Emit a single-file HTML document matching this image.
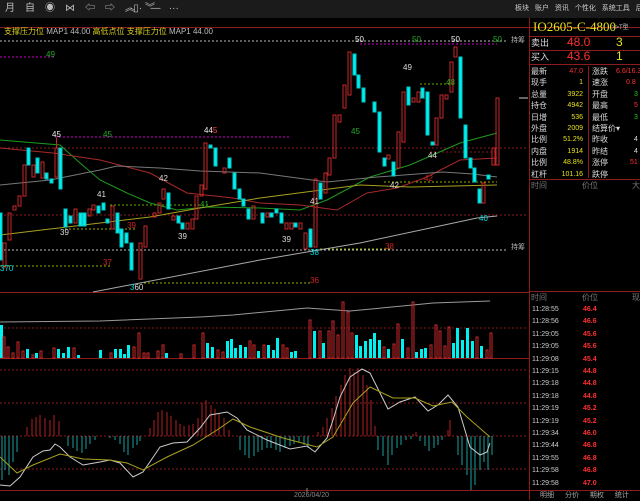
<!DOCTYPE html>
<html><head><meta charset="utf-8"><style>
*{margin:0;padding:0}
body{width:640px;height:500px;background:#000;overflow:hidden;position:relative;font-family:"Liberation Sans","Noto Sans CJK SC",sans-serif;}
.t{position:absolute;white-space:nowrap;font-size:8px;line-height:10px}
svg{position:absolute;left:0;top:0}
</style></head><body>
<svg width="640" height="500" viewBox="0 0 640 500">
<rect x="0" y="0" width="640" height="18" fill="#1b1b1b"/>
<!-- frame -->
<g stroke="#8c1c1c" stroke-width="1" fill="none">
<line x1="0" y1="27.5" x2="640" y2="27.5"/>
<line x1="0" y1="292.5" x2="529" y2="292.5"/>
<line x1="0" y1="358.5" x2="529" y2="358.5"/>
<line x1="0" y1="490.5" x2="640" y2="490.5"/>
<line x1="529.5" y1="18" x2="529.5" y2="500"/>
<line x1="530" y1="36.5" x2="640" y2="36.5"/>
<line x1="530" y1="50.5" x2="640" y2="50.5"/>
<line x1="530" y1="64.5" x2="640" y2="64.5"/>
<line x1="588.5" y1="66" x2="588.5" y2="178"/>
<line x1="530" y1="179.5" x2="640" y2="179.5"/>
<line x1="530" y1="291.5" x2="640" y2="291.5"/>
</g>
<!-- dotted levels -->
<g fill="none" stroke-dasharray="2,2">
<line x1="0" y1="41" x2="508" y2="41" stroke="#bbb"/>
<line x1="0" y1="250" x2="508" y2="250" stroke="#bbb"/>
<line x1="0" y1="148" x2="528" y2="148" stroke="#8a1a1a"/>
<line x1="0" y1="215" x2="528" y2="215" stroke="#8a1a1a"/>
<line x1="0" y1="57" x2="55" y2="57" stroke="#c0c"/>
<line x1="55" y1="137" x2="290" y2="137" stroke="#c0c"/>
<line x1="360" y1="44" x2="497" y2="44" stroke="#c0c"/>
<line x1="0" y1="266" x2="110" y2="266" stroke="#9a0"/>
<line x1="65" y1="229" x2="135" y2="229" stroke="#9a0"/>
<line x1="110" y1="205" x2="210" y2="205" stroke="#6a0"/>
<line x1="140" y1="283" x2="310" y2="283" stroke="#9a0"/>
<line x1="320" y1="249" x2="390" y2="249" stroke="#9a0"/>
<line x1="384" y1="182" x2="497" y2="182" stroke="#9a0"/>
<line x1="420" y1="84" x2="455" y2="84" stroke="#6a0"/>
<line x1="430" y1="152" x2="497" y2="152" stroke="#8a1a1a"/>
<line x1="0" y1="328" x2="528" y2="328" stroke="#8a1a1a"/>
<line x1="0" y1="370" x2="528" y2="370" stroke="#8a1a1a"/>
<line x1="0" y1="403" x2="528" y2="403" stroke="#8a1a1a"/>
<line x1="0" y1="469" x2="528" y2="469" stroke="#8a1a1a"/>
<line x1="0" y1="436" x2="528" y2="436" stroke="#8a1a1a"/>
</g>
<!-- MAs -->
<g fill="none" stroke-width="1">
<polyline stroke="#1c9a1c" points="0,140 60,145 80,163 100,180 127,193 150,203 177,210 207,207 260,208 300,210 327,200 370,177 410,165 460,143 497,133"/>
<polyline stroke="#a82a2a" points="0,148 53,153 100,160 150,173 187,193 233,198 260,203 300,205 337,210 367,193 397,188 427,177 460,160 497,158"/>
<polyline stroke="#777" points="0,185 50,180 100,170 117,166 160,168 200,171 260,173 327,182 377,177 443,172 473,174 497,177"/>
<polyline stroke="#a8a020" points="0,235 67,227 150,217 200,208 260,198 360,185 410,187 497,185"/>
<polyline stroke="#aaa" points="93,292 260,260 360,243 477,218 497,216"/>
<line x1="519" y1="98" x2="528" y2="98" stroke="#ccc"/>
</g>
<!-- candles -->
<g fill="#00f0f0" stroke="#00c8c8" stroke-width="1">
<rect x="-1" y="213" width="3" height="47"/><rect x="27" y="148" width="3" height="17"/><rect x="36" y="158" width="3" height="15"/><rect x="45" y="173" width="3" height="6"/><rect x="50" y="179" width="3" height="4"/><rect x="59" y="148" width="3" height="41"/><rect x="64" y="209" width="3" height="18"/><rect x="69" y="216" width="3" height="7"/><rect x="79" y="213" width="3" height="13"/><rect x="83" y="213" width="3" height="13"/><rect x="97" y="206" width="3" height="7"/><rect x="102" y="203" width="3" height="7"/><rect x="106" y="219" width="3" height="4"/><rect x="116" y="213" width="3" height="20"/><rect x="120" y="229" width="3" height="18"/><rect x="125" y="233" width="3" height="10"/><rect x="130" y="243" width="3" height="27"/><rect x="167" y="193" width="3" height="16"/><rect x="177" y="216" width="3" height="7"/><rect x="181" y="223" width="3" height="6"/><rect x="209" y="145" width="3" height="3"/><rect x="214" y="148" width="3" height="18"/><rect x="228" y="158" width="3" height="10"/><rect x="233" y="173" width="3" height="16"/><rect x="238" y="189" width="3" height="10"/><rect x="242" y="199" width="3" height="7"/><rect x="247" y="209" width="3" height="10"/><rect x="261" y="213" width="3" height="10"/><rect x="270" y="213" width="3" height="4"/><rect x="275" y="209" width="3" height="4"/><rect x="280" y="213" width="3" height="10"/><rect x="294" y="223" width="3" height="4"/><rect x="309" y="229" width="3" height="18"/><rect x="319" y="183" width="3" height="16"/><rect x="353" y="54" width="3" height="21"/><rect x="357" y="75" width="3" height="13"/><rect x="362" y="88" width="3" height="14"/><rect x="373" y="102" width="3" height="10"/><rect x="378" y="112" width="3" height="40"/><rect x="383" y="158" width="3" height="8"/><rect x="392" y="162" width="3" height="14"/><rect x="407" y="87" width="3" height="18"/><rect x="421" y="88" width="3" height="10"/><rect x="426" y="92" width="3" height="43"/><rect x="431" y="142" width="3" height="3"/><rect x="459" y="57" width="3" height="61"/><rect x="464" y="125" width="3" height="33"/><rect x="469" y="158" width="3" height="10"/><rect x="473" y="168" width="3" height="14"/><rect x="478" y="189" width="3" height="14"/><rect x="487" y="175" width="3" height="4"/>
</g>
<g fill="none" stroke="#c8282a" stroke-width="1">
<rect x="3" y="243" width="3" height="24"/><rect x="8" y="213" width="3" height="27"/><rect x="13" y="206" width="3" height="4"/><rect x="18" y="196" width="3" height="10"/><rect x="23" y="165" width="3" height="31"/><rect x="32" y="165" width="3" height="12"/><rect x="41" y="162" width="3" height="16"/><rect x="55" y="148" width="3" height="29"/><line x1="56.5" y1="138" x2="56.5" y2="148"/><rect x="74" y="209" width="3" height="14"/><rect x="88" y="209" width="3" height="7"/><rect x="92" y="205" width="3" height="5"/><rect x="111" y="206" width="3" height="23"/><rect x="139" y="243" width="3" height="36"/><rect x="144" y="226" width="3" height="21"/><rect x="153" y="213" width="3" height="4"/><rect x="158" y="203" width="3" height="10"/><rect x="162" y="189" width="3" height="10"/><rect x="172" y="216" width="3" height="4"/><rect x="186" y="223" width="3" height="6"/><rect x="191" y="219" width="3" height="10"/><rect x="195" y="196" width="3" height="23"/><rect x="200" y="185" width="3" height="11"/><rect x="204" y="143" width="3" height="46"/><rect x="223" y="168" width="3" height="5"/><rect x="252" y="206" width="3" height="13"/><rect x="266" y="213" width="3" height="4"/><rect x="285" y="223" width="3" height="6"/><rect x="290" y="223" width="3" height="6"/><rect x="299" y="223" width="3" height="6"/><rect x="304" y="233" width="3" height="16"/><rect x="314" y="179" width="3" height="68"/><rect x="324" y="173" width="3" height="20"/><rect x="328" y="158" width="3" height="17"/><rect x="333" y="115" width="3" height="43"/><rect x="338" y="115" width="3" height="7"/><rect x="343" y="85" width="3" height="23"/><rect x="348" y="52" width="3" height="43"/><rect x="387" y="155" width="3" height="4"/><rect x="397" y="132" width="3" height="36"/><rect x="402" y="92" width="3" height="50"/><rect x="412" y="98" width="3" height="4"/><rect x="417" y="92" width="3" height="10"/><rect x="435" y="118" width="3" height="27"/><rect x="440" y="95" width="3" height="23"/><rect x="445" y="95" width="3" height="4"/><rect x="450" y="62" width="3" height="30"/><rect x="454" y="47" width="3" height="10"/><rect x="482" y="183" width="3" height="20"/><rect x="492" y="148" width="3" height="17"/><rect x="496" y="98" width="3" height="67"/>
</g>
<!-- volume -->
<polyline fill="none" stroke="#999" points="0,322 100,321 200,317 233,315 307,308 350,311 413,305 433,303 490,301"/>
<g fill="#00f0f0">
<rect x="0" y="325" width="3" height="33"/><rect x="26" y="349" width="3" height="9"/><rect x="35" y="353" width="3" height="5"/><rect x="57" y="349" width="3" height="9"/><rect x="62" y="353" width="3" height="5"/><rect x="67" y="347" width="3" height="11"/><rect x="77" y="355" width="3" height="3"/><rect x="99" y="350" width="3" height="8"/><rect x="114" y="349" width="3" height="9"/><rect x="119" y="349" width="3" height="9"/><rect x="123" y="354" width="3" height="4"/><rect x="127" y="345" width="3" height="13"/><rect x="165" y="353" width="3" height="5"/><rect x="206" y="343" width="3" height="15"/><rect x="211" y="347" width="3" height="11"/><rect x="226" y="341" width="3" height="17"/><rect x="230" y="339" width="3" height="19"/><rect x="234" y="348" width="3" height="10"/><rect x="239" y="345" width="3" height="13"/><rect x="244" y="347" width="3" height="11"/><rect x="257" y="351" width="3" height="7"/><rect x="267" y="345" width="3" height="13"/><rect x="272" y="350" width="3" height="8"/><rect x="276" y="338" width="3" height="20"/><rect x="290" y="352" width="3" height="6"/><rect x="294" y="351" width="3" height="7"/><rect x="313" y="331" width="3" height="27"/><rect x="322" y="343" width="3" height="15"/><rect x="355" y="335" width="3" height="23"/><rect x="359" y="346" width="3" height="12"/><rect x="364" y="341" width="3" height="17"/><rect x="369" y="339" width="3" height="19"/><rect x="373" y="333" width="3" height="25"/><rect x="378" y="340" width="3" height="18"/><rect x="387" y="349" width="3" height="9"/><rect x="401" y="339" width="3" height="19"/><rect x="415" y="352" width="3" height="6"/><rect x="420" y="349" width="3" height="9"/><rect x="424" y="348" width="3" height="10"/><rect x="452" y="343" width="3" height="15"/><rect x="456" y="328" width="3" height="30"/><rect x="461" y="340" width="3" height="18"/><rect x="466" y="328" width="3" height="30"/><rect x="471" y="341" width="3" height="17"/><rect x="480" y="346" width="3" height="12"/>
</g>
<g fill="none" stroke="#c8282a">
<rect x="3" y="337" width="2" height="21"/><rect x="7" y="347" width="2" height="11"/><rect x="12" y="353" width="2" height="5"/><rect x="17" y="342" width="2" height="16"/><rect x="22" y="351" width="2" height="7"/><rect x="32" y="355" width="2" height="3"/><rect x="40" y="351" width="2" height="7"/><rect x="53" y="348" width="2" height="10"/><rect x="73" y="348" width="2" height="10"/><rect x="110" y="353" width="2" height="5"/><rect x="133" y="347" width="2" height="11"/><rect x="138" y="333" width="2" height="25"/><rect x="143" y="353" width="2" height="5"/><rect x="147" y="353" width="2" height="5"/><rect x="157" y="351" width="2" height="7"/><rect x="162" y="345" width="2" height="13"/><rect x="180" y="354" width="2" height="4"/><rect x="193" y="345" width="2" height="13"/><rect x="202" y="333" width="2" height="25"/><rect x="217" y="350" width="2" height="8"/><rect x="222" y="352" width="2" height="6"/><rect x="249" y="341" width="2" height="17"/><rect x="253" y="345" width="2" height="13"/><rect x="263" y="345" width="2" height="13"/><rect x="282" y="345" width="2" height="13"/><rect x="286" y="348" width="2" height="10"/><rect x="309" y="320" width="2" height="38"/><rect x="319" y="331" width="2" height="27"/><rect x="328" y="331" width="2" height="27"/><rect x="332" y="321" width="2" height="37"/><rect x="337" y="335" width="2" height="23"/><rect x="342" y="302" width="2" height="56"/><rect x="347" y="312" width="2" height="46"/><rect x="351" y="333" width="2" height="25"/><rect x="383" y="347" width="2" height="11"/><rect x="393" y="344" width="2" height="14"/><rect x="397" y="324" width="2" height="34"/><rect x="407" y="348" width="2" height="10"/><rect x="412" y="302" width="2" height="56"/><rect x="430" y="345" width="2" height="13"/><rect x="435" y="325" width="2" height="33"/><rect x="439" y="331" width="2" height="27"/><rect x="444" y="346" width="2" height="12"/><rect x="448" y="327" width="2" height="31"/><rect x="476" y="337" width="2" height="21"/><rect x="486" y="350" width="2" height="8"/><rect x="490" y="333" width="2" height="25"/>
</g>
<!-- MACD hist -->
<path stroke="#b02020" stroke-width="1" fill="none" d="M27 436V427M32 436V419M36 436V417M40 436V415M45 436V418M50 436V420M54 436V415M59 436V421M150 436V428M154 436V420M158 436V412M162 436V410M167 436V412M171 436V416M176 436V420M180 436V424M184 436V426M189 436V425M193 436V424M198 436V418M202 436V403M206 436V400M211 436V405M215 436V409M219 436V414M224 436V418M229 436V430M318 436V432M323 436V427M327 436V418M332 436V408M336 436V396M341 436V385M345 436V375M350 436V368M354 436V372M358 436V368M363 436V375M367 436V385M371 436V400M375 436V426M413 436V434M416 436V432M448 436V430M450 436V420"/>
<path stroke="#1aa0a0" stroke-width="1" fill="none" d="M2 436V480M5 436V470M9 436V475M13 436V462M17 436V452M68 436V446M73 436V448M77 436V451M82 436V453M86 436V449M90 436V444M95 436V440M110 436V438M115 436V440M120 436V444M124 436V452M128 436V455M133 436V448M137 436V445M140 436V441M240 436V450M245 436V455M249 436V458M254 436V456M258 436V452M262 436V450M267 436V448M271 436V448M276 436V450M280 436V452M285 436V448M290 436V446M294 436V444M299 436V442M304 436V445M308 436V448M378 436V450M383 436V456M388 436V465M392 436V455M397 436V448M401 436V445M406 436V440M411 436V439M420 436V441M425 436V446M429 436V451M434 436V448M438 436V445M442 436V440M458 436V455M462 436V465M467 436V475M471 436V490M475 436V485M480 436V470M484 436V462M488 436V470M492 436V455"/>
<polyline fill="none" stroke="#ccc" points="0,485 10,486 20,477 33,457 43,451 50,450 55,444 60,447 70,457 83,465 100,462 110,460 120,463 133,477 143,472 160,447 173,443 187,442 200,428 210,415 227,412 237,418 247,430 267,440 290,449 307,446 315,452 327,438 333,420 340,397 350,377 362,369 370,373 380,393 388,409 400,402 415,397 428,411 438,405 448,395 458,407 470,447 480,455 487,452 490,443"/>
<polyline fill="none" stroke="#a8a020" points="0,457 17,473 33,465 60,454 83,459 110,460 127,463 143,470 167,457 193,445 217,430 233,419 250,427 283,438 317,447 333,437 353,403 370,387 393,398 415,398 433,406 452,402 467,417 490,437"/>
<line x1="307" y1="488" x2="307" y2="492" stroke="#888"/>
</svg>
<!-- toolbar -->
<div class="t" style="left:5px;top:4px;color:#bbb;font-size:10px;letter-spacing:10px">月自◉⋈⇦⇨︽︾</div>
<div class="t" style="left:130px;top:4px;color:#bbb;font-size:10px">·▯·&nbsp;&nbsp;&nbsp;—&nbsp;&nbsp;&nbsp;···</div>
<div class="t" style="left:515px;top:4px;color:#ccc;font-size:7px;word-spacing:4px">板块 账户 资讯 个性化 系统工具 后</div>
<!-- legend -->
<div class="t" style="left:4px;top:27px;color:#d8d020">支撑压力位 <span style="color:#bbb">MAP1 44.00</span> 高低点位 支撑压力位 <span style="color:#bbb">MAP1 44.00</span></div>
<div class="t" style="left:511px;top:36px;color:#bbb;font-size:7px">持筹</div>
<div class="t" style="left:511px;top:243px;color:#bbb;font-size:7px">持筹</div>
<!-- chart labels -->
<div class="t" style="left:46px;top:50px;color:#2a2">49</div>
<div class="t" style="left:52px;top:130px;color:#eee">45</div>
<div class="t" style="left:103px;top:130px;color:#2a2">45</div>
<div class="t" style="left:97px;top:190px;color:#ddd">41</div>
<div class="t" style="left:159px;top:174px;color:#ddd">42</div>
<div class="t" style="left:60px;top:228px;color:#ddd">39</div>
<div class="t" style="left:178px;top:232px;color:#ddd">39</div>
<div class="t" style="left:282px;top:235px;color:#ddd">39</div>
<div class="t" style="left:0px;top:264px;color:#0dd">370</div>
<div class="t" style="left:103px;top:258px;color:#c22">37</div>
<div class="t" style="left:127px;top:221px;color:#c22">39</div>
<div class="t" style="left:130px;top:283px;color:#0dd">3<span style="color:#ddd">60</span></div>
<div class="t" style="left:204px;top:126px;color:#eee">44<span style="color:#f44">5</span></div>
<div class="t" style="left:200px;top:200px;color:#2a2">41</div>
<div class="t" style="left:355px;top:35px;color:#eee">50</div>
<div class="t" style="left:412px;top:35px;color:#2a2">50</div>
<div class="t" style="left:451px;top:35px;color:#eee">50</div>
<div class="t" style="left:493px;top:35px;color:#2a2">50</div>
<div class="t" style="left:403px;top:63px;color:#ddd">49</div>
<div class="t" style="left:446px;top:78px;color:#2a2">48</div>
<div class="t" style="left:351px;top:127px;color:#2a2">45</div>
<div class="t" style="left:428px;top:151px;color:#ddd">44</div>
<div class="t" style="left:390px;top:181px;color:#ddd">42</div>
<div class="t" style="left:424px;top:174px;color:#c22">42</div>
<div class="t" style="left:310px;top:197px;color:#ddd">41</div>
<div class="t" style="left:310px;top:248px;color:#0dd">38</div>
<div class="t" style="left:385px;top:242px;color:#c22">38</div>
<div class="t" style="left:310px;top:276px;color:#c22">36</div>
<div class="t" style="left:479px;top:214px;color:#0dd">40</div>
<div class="t" style="left:294px;top:491px;color:#888;font-size:7px">2026/04/20</div>
<!-- right panel -->
<div class="t" style="left:533px;top:20px;color:#e8e020;font-family:'Liberation Serif',serif;font-size:13px;line-height:14px">IO2605-C-4800</div>
<div class="t" style="left:612px;top:23px;color:#ccc;font-size:6px">&gt;&gt;T型</div>
<div class="t" style="left:531px;top:38px;color:#ddd;font-size:9px">卖出</div>
<div class="t" style="left:567px;top:36px;color:#ff3030;font-size:12px;line-height:13px">48.0</div>
<div class="t" style="left:616px;top:36px;color:#e8e020;font-size:12px;line-height:13px">3</div>
<div class="t" style="left:531px;top:52px;color:#ddd;font-size:9px">买入</div>
<div class="t" style="left:567px;top:50px;color:#ff3030;font-size:12px;line-height:13px">43.6</div>
<div class="t" style="left:616px;top:50px;color:#e8e020;font-size:12px;line-height:13px">1</div>
<div class="t" style="left:531px;top:66px;color:#ddd;font-size:8px;line-height:11.4px">最新<br>现手<br>总量<br>持仓<br>日增<br>外盘<br>比例<br>内盘<br>比例<br>杠杆</div>
<div class="t" style="left:556px;top:66px;width:27px;text-align:right;color:#e8e020;font-size:7px;line-height:11.4px"><span style="color:#ff3030">47.0</span><br>1<br>3922<br>4942<br>536<br>2009<br>51.2%<br>1914<br>48.8%<br>101.16</div>
<div class="t" style="left:592px;top:66px;color:#ddd;font-size:8px;line-height:11.4px">涨跌<br>速涨<br>开盘<br>最高<br>最低<br>结算价▾<br>昨收<br>昨结<br>涨停<br>跌停</div>
<div class="t" style="left:616px;top:66px;color:#ff3030;font-size:7px;line-height:11.4px">6.6/16.3<br><span style="padding-left:10px">0.8</span><br><span style="padding-left:18px;color:#2c2">3</span><br><span style="padding-left:18px">5</span><br><span style="padding-left:18px;color:#2c2">3</span><br><br><span style="padding-left:18px;color:#ddd">4</span><br><span style="padding-left:18px;color:#ddd">4</span><br><span style="padding-left:14px">51</span></div>
<div class="t" style="left:531px;top:181px;color:#777;font-size:8px">时间</div>
<div class="t" style="left:582px;top:181px;color:#777;font-size:8px">价位</div>
<div class="t" style="left:632px;top:181px;color:#777;font-size:8px">大</div>
<div class="t" style="left:531px;top:293px;color:#777;font-size:8px">时间</div>
<div class="t" style="left:582px;top:293px;color:#777;font-size:8px">价位</div>
<div class="t" style="left:632px;top:293px;color:#777;font-size:8px">现</div>
<div class="t" style="left:532px;top:304px;color:#ccc;font-size:7px;line-height:12.4px">11:28:55<br>11:28:56<br>11:29:05<br>11:29:05<br>11:29:08<br>11:29:15<br>11:29:18<br>11:29:18<br>11:29:19<br>11:29:19<br>11:29:34<br>11:29:44<br>11:29:55<br>11:29:58<br>11:29:58</div>
<div class="t" style="left:583px;top:304px;color:#ff3030;font-size:7px;font-weight:bold;line-height:12.4px">46.4<br>46.6<br>45.6<br>45.6<br>45.4<br>44.8<br>44.8<br>44.8<br>45.2<br>45.2<br>46.0<br>46.8<br>46.8<br>46.8<br>47.0</div>
<div class="t" style="left:540px;top:491px;color:#aaa;font-size:7px;word-spacing:9px">明细 分价 期权 统计</div>
</body></html>
